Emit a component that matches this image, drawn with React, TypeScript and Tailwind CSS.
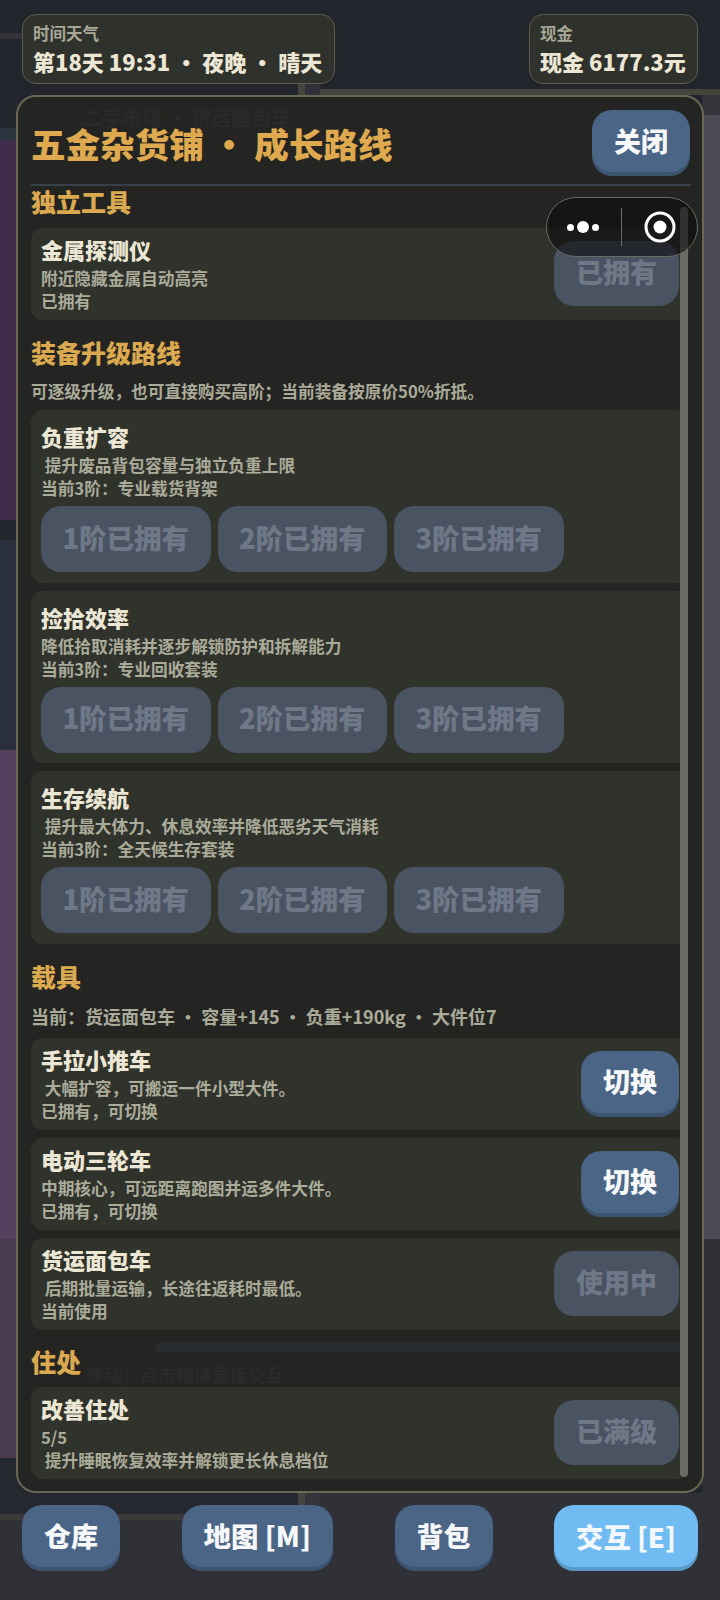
const tiers = ['1阶已拥有', '2阶已拥有', '3阶已拥有'];

function Btn({ children, tone = 'blue', className = '' }: { children: React.ReactNode; tone?: 'blue' | 'sky' | 'off'; className?: string }) {
  const toneClass =
    tone === 'sky'
      ? 'bg-[#70bcf2] shadow-[0_4px_0_#5a9ac8] text-[#f3f8fc]'
      : tone === 'off'
        ? 'bg-[#4a5362] text-[#6f7887]'
        : 'bg-[#4a6585] shadow-[0_4px_0_#3d5470] text-[#f5f7f9]';
  return (
    <div className={`flex h-[62px] shrink-0 items-center justify-center whitespace-nowrap rounded-[20px] px-[22px] text-[27px] font-black ${toneClass} ${className}`}>
      {children}
    </div>
  );
}

function Heading({ children, className = '' }: { children: React.ReactNode; className?: string }) {
  return <div className={`h-[30px] text-[25px] font-black leading-[26px] text-[#dba94f] ${className}`}>{children}</div>;
}

function Sub({ children, className = '' }: { children: React.ReactNode; className?: string }) {
  return <div className={`h-[23px] whitespace-pre text-[16.7px] font-bold leading-[23px] text-[#abab9a] ${className}`}>{children}</div>;
}

function ItemRow({ title, lines, action, tone = 'off' }: { title: string; lines: string[]; action: string; tone?: 'blue' | 'off' }) {
  return (
    <div className="flex h-[92px] items-start justify-between rounded-[12px] bg-[#30322c] pl-[10px] pr-[9px]">
      <div className="pt-[7px]">
        <div className="mb-[4px] h-[28px] text-[22px] font-black leading-[28px] text-[#ece7d4]">{title}</div>
        {lines.map((l) => (
          <Sub key={l}>{l}</Sub>
        ))}
      </div>
      <Btn tone={tone} className={tone === 'off' ? 'mt-[13px] !h-[65px] pb-[2px]' : 'mt-[13px]'}>
        {action}
      </Btn>
    </div>
  );
}

function TierCard({ title, desc, current }: { title: string; desc: string; current: string }) {
  return (
    <div className="h-[172.5px] rounded-[12px] bg-[#30322c] pl-[10px] pt-[12px]">
      <div className="mb-[4px] h-[28px] text-[22px] font-black leading-[28px] text-[#ece7d4]">{title}</div>
      <Sub>{desc}</Sub>
      <Sub>{current}</Sub>
      <div className="mt-[6px] flex gap-[7px]">
        {tiers.map((t) => (
          <div key={t} className="flex h-[66px] w-[169.5px] items-center justify-center rounded-[20px] bg-[#4a5362] pb-[3px] text-[27.5px] font-black text-[#6f7887]">
            {t}
          </div>
        ))}
      </div>
    </div>
  );
}

function Chip({ label, value }: { label: string; value: string }) {
  return (
    <div className="h-[70px] rounded-[14px] border border-[#5c5b50] bg-[#2f312c] px-[10px] pt-[6px]">
      <div className="h-[24px] text-[16.5px] font-bold leading-[24px] text-[#a8a897]">{label}</div>
      <div className="h-[32px] whitespace-pre text-[22px] font-black leading-[32px] text-[#ece7d4]">{value}</div>
    </div>
  );
}

// the dimmed game scene that sits behind the panel
function Scene() {
  return (
    <div className="absolute inset-0 flex flex-col bg-[#23252c]">
      <div className="flex h-[95px] shrink-0 flex-col">
        <div className="mt-[33px] h-[6px] w-[22px] bg-[#33353a]" />
        <div className="mt-[44px] flex h-[12px] items-end">
          <div className="ml-[298px] h-[12px] w-[7px] bg-[#44453f]" />
          <div className="h-[12px] w-[15px] bg-[#2f3239]" />
          <div className="h-[6px] flex-1 bg-[#44443e]" />
        </div>
      </div>
      <div className="flex flex-1 justify-between">
        <div className="flex w-[20px] flex-col">
          <div className="h-[33px] bg-[#23262d]" />
          <div className="h-[12px] bg-[#2b3540]" />
          <div className="h-[380px] bg-[#402d4c]" />
          <div className="h-[20px] bg-[#232730]" />
          <div className="h-[210px] bg-[#2a2f3d]" />
          <div className="h-[489px] bg-[#54405f]" />
          <div className="h-[219px] bg-[#4a3a50]" />
          <div className="h-[35px] bg-[#262830]" />
        </div>
        <div className="flex w-[18px] flex-col">
          <div className="h-[20px] bg-[#33353a]" />
          <div className="h-[1124px] bg-[#4a4b55]" />
          <div className="flex-1 bg-[#2f3036]" />
        </div>
      </div>
      <div className="flex h-[107px] shrink-0 bg-[#303136]">
        <div className="h-[27px] w-[298px] border-b-[6px] border-[#3a3a38] bg-[#262830]" />
        <div className="h-[17px] w-[7px] bg-[#44453f]" />
        <div className="h-[17px] w-[15px] bg-[#33353a]" />
      </div>
    </div>
  );
}

export default function App() {
  return (
    <div className="relative h-[1600px] w-[720px] overflow-hidden [font-family:'Noto_Sans_CJK_SC','Noto_Sans',sans-serif]">
      <Scene />

      <div className="relative flex h-full flex-col">
        <div className="flex h-[95px] shrink-0 items-start justify-between pl-[22px] pr-[22px] pt-[14px]">
          <div className="w-[313px]">
            <Chip label="时间天气" value="第18天 19:31 · 夜晚 · 晴天" />
          </div>
          <div className="w-[169px]">
            <Chip label="现金" value="现金 6177.3元" />
          </div>
        </div>

        <div className="relative mx-[16px] flex h-[1398px] shrink-0 flex-col rounded-[20px] border-2 border-[#6b6655] bg-[#242522] pl-[13px] pr-[12px] pt-[13px]">
          {/* what shows faintly through the panel */}
          <div className="absolute left-[64px] top-[11px] text-[20px] font-bold leading-[20px] text-[#2a2b28]">二手市场 · 货运面包车</div>
          <div className="absolute left-[490px] top-[112px] h-[190px] w-[182px] rounded-[14px] border border-[#282926]" />
          <div className="absolute left-[137px] right-[20px] top-[1245px] h-[10px] rounded-full bg-[#282c2f]" />
          <div className="absolute left-[68px] top-[1264px] text-[18px] font-bold text-[#2a2b28]">移动；点击物体直接交互</div>

          <div className="relative flex h-[66px] shrink-0 items-start justify-between">
            <div className="mt-[18px] text-[34.6px] font-black leading-[30px] text-[#dfa94f]">五金杂货铺 · 成长路线</div>
            <Btn>关闭</Btn>
          </div>
          <div className="relative mr-[-1px] mt-[8px] h-[2px] shrink-0 bg-[#38404c]" />

          <div className="relative mr-[2px] mt-[2px] flex-1">
            <Heading>独立工具</Heading>
            <div className="mt-[10px]">
              <ItemRow title="金属探测仪" lines={['附近隐藏金属自动高亮', '已拥有']} action="已拥有" />
            </div>

            <Heading className="mt-[19px]">装备升级路线</Heading>
            <div className="mt-[11px]">
              <Sub>可逐级升级，也可直接购买高阶；当前装备按原价50%折抵。</Sub>
            </div>
            <div className="mt-[7px] flex flex-col gap-[8px]">
              <TierCard title="负重扩容" desc=" 提升废品背包容量与独立负重上限" current="当前3阶：专业载货背架" />
              <TierCard title="捡拾效率" desc="降低拾取消耗并逐步解锁防护和拆解能力" current="当前3阶：专业回收套装" />
              <TierCard title="生存续航" desc=" 提升最大体力、休息效率并降低恶劣天气消耗" current="当前3阶：全天候生存套装" />
            </div>

            <Heading className="mt-[19.5px]">载具</Heading>
            <div className="mt-[12px]">
              <Sub className="!text-[18px]">当前：货运面包车 · 容量+145 · 负重+190kg · 大件位7</Sub>
            </div>
            <div className="mt-[9.5px] flex flex-col gap-[8px]">
              <ItemRow title="手拉小推车" lines={[' 大幅扩容，可搬运一件小型大件。', '已拥有，可切换']} action="切换" tone="blue" />
              <ItemRow title="电动三轮车" lines={['中期核心，可远距离跑图并运多件大件。', '已拥有，可切换']} action="切换" tone="blue" />
              <ItemRow title="货运面包车" lines={[' 后期批量运输，长途往返耗时最低。', '当前使用']} action="使用中" />
            </div>

            <Heading className="mt-[18px]">住处</Heading>
            <div className="mt-[9.5px]">
              <ItemRow title="改善住处" lines={['5/5', ' 提升睡眠恢复效率并解锁更长休息档位']} action="已满级" />
            </div>
          </div>

          {/* scrollbar */}
          <div className="absolute bottom-[14px] right-[14px] top-[110px] w-[8px] rounded-full bg-[#6a6b66]" />
        </div>

        <div className="flex justify-between px-[22px] pt-[12px]">
          <Btn>仓库</Btn>
          <Btn className="!text-[27.5px]">地图 [M]</Btn>
          <Btn>背包</Btn>
          <Btn tone="sky" className="!text-[27.3px]">交互 [E]</Btn>
        </div>
      </div>

      {/* mini program capsule */}
      <div className="absolute left-[546px] top-[197px] flex h-[60px] w-[152px] items-center rounded-full border border-[#6a6a66] bg-[#0c0c0c]/60">
        <div className="flex w-[74px] items-center justify-center gap-[3px] pr-[2px]">
          <span className="h-[7px] w-[7px] rounded-full bg-white" />
          <span className="h-[12px] w-[12px] rounded-full bg-white" />
          <span className="h-[7px] w-[7px] rounded-full bg-white" />
        </div>
        <div className="h-[38px] w-px bg-[#6a6a66]" />
        <div className="flex flex-1 items-center justify-center">
          <svg width="32" height="32" viewBox="0 0 32 32">
            <circle cx="16" cy="16" r="14" fill="none" stroke="#fff" strokeWidth="3" />
            <circle cx="16" cy="16" r="6.5" fill="#fff" />
          </svg>
        </div>
      </div>
    </div>
  );
}
